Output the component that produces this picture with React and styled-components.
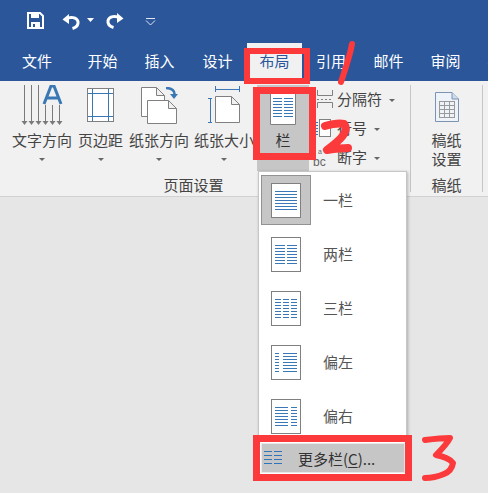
import React from 'react';
import styled, { createGlobalStyle } from 'styled-components';

const GlobalStyle = createGlobalStyle`
  html, body {
    margin: 0;
    padding: 0;
    background: #e6e6e6;
  }
  body {
    font-family: "Noto Sans CJK SC", "Liberation Sans", sans-serif;
  }
`;

const Page = styled.div`
  position: relative;
  width: 488px;
  height: 493px;
  overflow: hidden;
  background: #e6e6e6;
`;

const TitleBar = styled.div`
  height: 81px;
  background: #2b579a;
  display: flex;
  flex-direction: column;
`;

const QuickAccess = styled.div`
  height: 43px;
  display: flex;
  align-items: flex-start;
  padding: 12px 0 0 27px;
  box-sizing: border-box;
`;

const QatIcon = styled.svg`
  display: block;
  margin-left: ${p => p.$gap || 0}px;
  margin-top: ${p => p.$top || 0}px;
`;

const Tabs = styled.div`
  height: 38px;
  display: flex;
`;

const Tab = styled.div`
  width: ${p => p.$w}px;
  flex: none;
  height: 38px;
  box-sizing: border-box;
  padding-bottom: 2px;
  display: flex;
  align-items: center;
  justify-content: center;
  font-size: 15px;
  line-height: 20px;
  color: ${p => (p.$active ? '#2b579a' : '#fff')};
  background: ${p => (p.$active ? '#f1f1f1' : 'transparent')};
`;

const Ribbon = styled.div`
  height: 116px;
  background: #f1f1f1;
  border-bottom: 1px solid #d2d2d2;
  box-sizing: border-box;
  display: flex;
  padding-top: 4px;
`;

const Group = styled.div`
  width: ${p => p.$w}px;
  flex: none;
  height: 107px;
  display: flex;
  flex-direction: column;
  border-right: 1px solid #c6c6c6;
  box-sizing: border-box;
`;

const GroupBody = styled.div`
  height: 90px;
  flex: none;
  display: flex;
  padding-left: ${p => p.$pad || 0}px;
`;

const GroupLabel = styled.div`
  height: 17px;
  font-size: 15px;
  line-height: 20px;
  color: #444;
  text-align: center;
  padding-right: ${p => p.$shift || 0}px;
`;

const LargeButton = styled.div`
  width: ${p => p.$w}px;
  margin-right: ${p => p.$mr || 0}px;
  flex: none;
  display: flex;
  flex-direction: column;
  align-items: center;
  font-size: 15px;
  line-height: 20px;
  color: #444;
  white-space: nowrap;
`;

const IconSlot = styled.div`
  height: ${p => 43 - (p.$lift || 0)}px;
  padding-bottom: ${p => p.$lift || 0}px;
  display: flex;
  align-items: flex-end;
  margin-bottom: 2px;
`;

const Caret = styled.span`
  width: 0;
  height: 0;
  margin-top: 8px;
  border-left: 3px solid transparent;
  border-right: 3px solid transparent;
  border-top: 3px solid #666;
`;

const StackedLabel = styled.span`
  text-align: center;
  line-height: 19px;
`;

const ColumnsButton = styled.div`
  width: 52px;
  height: 86px;
  margin-left: 3px;
  flex: none;
  background: #c6c6c6;
  display: flex;
  flex-direction: column;
  align-items: center;
  font-size: 15px;
  line-height: 20px;
  color: #333;
`;

const ColumnsIcon = styled.svg`
  display: block;
  margin: 8px 0 5px;
`;

const SmallList = styled.div`
  margin: 4px 0 0 8px;
  display: flex;
  flex-direction: column;
  gap: 9px;
`;

const SmallButton = styled.div`
  height: 20px;
  display: flex;
  align-items: center;
  gap: 4px;
  font-size: 15px;
  line-height: 20px;
  color: #444;
  white-space: nowrap;
`;

const SmallIcon = styled.svg`
  display: block;
  flex: none;
  margin-left: ${p => -(p.$nudge || 0)}px;
  margin-right: ${p => p.$nudge || 0}px;
`;

const SmallCaret = styled(Caret)`
  margin: 2px 0 0 3px;
`;

const Menu = styled.div`
  position: absolute;
  left: 258px;
  top: 171px;
  width: 149px;
  height: 304px;
  box-sizing: border-box;
  padding: 3px 1px 0 2px;
  background: #fff;
  border: 1px solid #c6c6c6;
  box-shadow: 1px 1px 3px rgba(0, 0, 0, 0.25);
`;

const MenuItem = styled.div`
  height: 54px;
  display: flex;
  align-items: flex-start;
  font-size: 15px;
  color: #555;
`;

const MenuIconBox = styled.div`
  width: 50px;
  height: 50px;
  box-sizing: border-box;
  display: flex;
  align-items: center;
  justify-content: center;
  background: ${p => (p.$selected ? '#c6c6c6' : 'transparent')};
  border: 1px solid ${p => (p.$selected ? '#929292' : 'transparent')};
`;

const MenuLabel = styled.span`
  margin: 15px 0 0 12px;
  line-height: 20px;
`;

const MoreRow = styled.div`
  height: 30px;
  margin: -2px 0 0 0;
  background: #c6c6c6;
  border: 1px solid #e8e8e8;
  box-sizing: border-box;
  display: flex;
  align-items: center;
  padding-left: 2px;
  font-size: 15px;
  color: #333;
`;

const MoreLabel = styled.span`
  margin-left: 16px;
  u {
    text-underline-offset: 2px;
  }
`;

const Annotations = styled.svg`
  position: absolute;
  left: 0;
  top: 0;
  pointer-events: none;
`;

const BLUE = '#3a78b5';
const GREY = '#808080';
const RED = '#fc3a3c';

const lines = (x1, x2, ys) => ys.map(y => `M${x1} ${y + 0.5}H${x2}`).join('');

const ROWS = [8, 11, 14, 17, 20, 23, 26];

const COLUMN_ICONS = {
  one: lines(4, 26, ROWS),
  two: lines(4, 14, ROWS) + lines(16, 26, ROWS),
  three: lines(4, 10, ROWS) + lines(12, 18, ROWS) + lines(20, 26, ROWS),
  left: lines(4, 8, ROWS) + lines(12, 26, ROWS),
  right: lines(4, 17, ROWS) + lines(20, 26, ROWS),
};

const ColumnDoc = ({ kind }) => (
  <svg width="30" height="35" viewBox="0 0 30 35">
    <rect x="0.5" y="0.5" width="29" height="34" fill="#fff" stroke={GREY} />
    <path d={COLUMN_ICONS[kind]} stroke={BLUE} fill="none" />
  </svg>
);

const SaveIcon = () => (
  <QatIcon width="17" height="17" viewBox="0 0 17 17">
    <path d="M1 1H13L16 4V16H1Z" fill="none" stroke="#fff" strokeWidth="2" />
    <path d="M4 1.5H12V6H4Z" fill="#fff" />
    <path d="M4 10H13V16H4Z" fill="#fff" />
    <path d="M6 12H8V15H6Z" fill="#2b579a" />
  </QatIcon>
);

const UndoIcon = () => (
  <QatIcon width="19" height="17" viewBox="0 0 19 17" $gap={18} $top={1}>
    <path d="M4 6C8 3.5 15 4 16 8.5C16.5 12 14 14.5 10.5 15.5" fill="none" stroke="#fff" strokeWidth="3" />
    <path d="M0.5 6.5L7 1V11Z" fill="#fff" />
  </QatIcon>
);

const RedoIcon = () => (
  <QatIcon width="19" height="17" viewBox="0 0 19 17" $gap={11}>
    <path d="M15 6C11 3.5 4 4 3 8.5C2.5 12 5 14.5 8.5 15.5" fill="none" stroke="#fff" strokeWidth="3" />
    <path d="M18.5 6.5L12 1V11Z" fill="#fff" />
  </QatIcon>
);

const TextDirectionIcon = () => (
  <svg width="42" height="41" viewBox="0 0 42 41">
    <path d="M3.5 0V37M10.5 0V37M17.5 0V37M24.5 20V37M31.5 20V37M38.5 20V37" stroke="#7a7a7a" fill="none" />
    {[3.5, 10.5, 17.5, 24.5, 31.5, 38.5].map(x => (
      <path key={x} d={`M${x - 3} 36H${x + 3}L${x} 40Z`} fill="#7a7a7a" />
    ))}
    <path d="M23 19L30 1H33L40 19M25.5 13H37.5" fill="none" stroke={BLUE} strokeWidth="3" />
  </svg>
);

const MarginsIcon = () => (
  <svg width="28" height="35" viewBox="0 0 28 35">
    <rect x="0.5" y="0.5" width="26" height="33" fill="#fff" stroke={GREY} />
    <path d="M5.5 1V33M21.5 1V33M1 5.5H26M1 28.5H26" stroke={BLUE} fill="none" />
  </svg>
);

const SheetPath = ({ x, y, w, h }) => (
  <path
    d={`M${x} ${y}H${x + w - 8}L${x + w} ${y + 8}V${y + h}H${x}Z M${x + w - 8} ${y}V${y + 8}H${x + w}`}
    fill="#fff"
    stroke={GREY}
  />
);

const OrientationIcon = () => (
  <svg width="37" height="38" viewBox="0 0 37 38">
    <SheetPath x={0.5} y={0.5} w={23} h={29} />
    <SheetPath x={6.5} y={13.5} w={29} h={23} />
    <path d="M25 1C31 1 34 4 33.5 8" fill="none" stroke={BLUE} strokeWidth="2.5" />
    <path d="M29 7H37L33 12Z" fill={BLUE} />
  </svg>
);

const SizeIcon = () => (
  <svg width="32" height="38" viewBox="0 0 32 38">
    <path d="M7.5 0V6M31.5 0V6M8 3.5H31M0 12.5H4M0 36.5H4M2.5 13V36" stroke={BLUE} fill="none" />
    <SheetPath x={7.5} y={10.5} w={24} h={26} />
  </svg>
);

const BreaksIcon = () => (
  <SmallIcon width="16" height="18" viewBox="0 0 16 18">
    <path d="M0.5 0V5.5H15.5V0M0 9.5H2M4 9.5H6M8 9.5H10M12 9.5H14M0.5 18V12.5H15.5V18" fill="none" stroke={GREY} />
  </SmallIcon>
);

const LineNumberIcon = () => (
  <SmallIcon width="16" height="18" viewBox="0 0 16 18" $nudge={2}>
    <rect x="4.5" y="0.5" width="11" height="17" fill="#fff" stroke={GREY} />
    <path d="M0 3.5H3M0 6.5H3M0 9.5H3M0 12.5H3M0 15.5H3" stroke={BLUE} />
  </SmallIcon>
);

const HyphenText = styled.text`
  font-family: "Liberation Sans", sans-serif;
  font-size: ${p => p.$size}px;
  fill: #666;
`;

const HyphenIcon = () => (
  <SmallIcon width="16" height="20" viewBox="0 0 16 20" $nudge={5}>
    <HyphenText x="6" y="7" $size={7}>a</HyphenText>
    <HyphenText x="1" y="19" $size={12}>bc</HyphenText>
  </SmallIcon>
);

const ManuscriptIcon = () => (
  <svg width="24" height="30" viewBox="0 0 24 30">
    <path d="M0.5 0.5H17L23.5 7V29.5H0.5Z" fill="#eef3fa" stroke="#7d93b2" />
    <path d="M17 0.5V7H23.5" fill="#cfdcec" stroke="#7d93b2" />
    <path
      d="M4 9.5H20M4 13.5H20M4 17.5H20M4 21.5H20M4 25.5H20M4.5 9V26M9.5 9V26M14.5 9V26M19.5 9V26"
      stroke="#9a9a9a"
      fill="none"
    />
  </svg>
);

const MoreColumnsIcon = () => (
  <svg width="18" height="14" viewBox="0 0 18 14">
    <path d={lines(0, 8, [0, 4, 8, 12]) + lines(10, 18, [0, 4, 8, 12])} stroke="#2f73bb" fill="none" />
  </svg>
);

const TABS = [
  { label: '文件', w: 74 },
  { label: '开始', w: 57 },
  { label: '插入', w: 57 },
  { label: '设计', w: 59 },
  { label: '布局', w: 55, active: true },
  { label: '引用', w: 58 },
  { label: '邮件', w: 57 },
  { label: '审阅', w: 57 },
  { label: '视图', w: 57 },
];

const LARGE_BUTTONS = [
  { label: '文字方向', w: 60, mr: 6, lift: 2, Icon: TextDirectionIcon },
  { label: '页边距', w: 45, mr: 6, lift: 5, Icon: MarginsIcon },
  { label: '纸张方向', w: 60, mr: 5, lift: 3, Icon: OrientationIcon },
  { label: '纸张大小', w: 60, mr: 0, lift: 4, Icon: SizeIcon },
];

const COLUMN_ITEMS = [
  { kind: 'one', label: '一栏', selected: true },
  { kind: 'two', label: '两栏' },
  { kind: 'three', label: '三栏' },
  { kind: 'left', label: '偏左' },
  { kind: 'right', label: '偏右' },
];

const App = () => (
  <Page>
    <GlobalStyle />
    <TitleBar>
      <QuickAccess>
        <SaveIcon />
        <UndoIcon />
        <QatIcon width="7" height="4" viewBox="0 0 7 4" $gap={6} $top={6}>
          <path d="M0 0H7L3.5 4Z" fill="#fff" />
        </QatIcon>
        <RedoIcon />
        <QatIcon width="11" height="8" viewBox="0 0 11 8" $gap={21} $top={6}>
          <path d="M1 2.5L5.5 7L10 2.5M1 0.5H10" fill="none" stroke="#dfe6f1" />
        </QatIcon>
      </QuickAccess>
      <Tabs>
        {TABS.map(({ label, w, active }) => (
          <Tab key={label} $active={active} $w={w}>
            {label}
          </Tab>
        ))}
      </Tabs>
    </TitleBar>

    <Ribbon>
      <Group $w={411}>
        <GroupBody $pad={12}>
          {LARGE_BUTTONS.map(({ label, w, mr, lift, Icon }) => (
            <LargeButton key={label} $w={w} $mr={mr}>
              <IconSlot $lift={lift}>
                <Icon />
              </IconSlot>
              {label}
              <Caret />
            </LargeButton>
          ))}
          <ColumnsButton>
            <ColumnsIcon width="26" height="32" viewBox="0 0 26 32">
              <path d="M0.5 0V31.5H25.5V0Z" fill="#fff" stroke={GREY} />
              <path d={lines(3, 12, [5, 8, 11, 14, 17, 20, 23]) + lines(14, 23, [5, 8, 11, 14, 17, 20, 23])} stroke={BLUE} fill="none" />
            </ColumnsIcon>
            栏
          </ColumnsButton>
          <SmallList>
            <SmallButton>
              <BreaksIcon />
              分隔符
              <SmallCaret />
            </SmallButton>
            <SmallButton>
              <LineNumberIcon />
              行号
              <SmallCaret />
            </SmallButton>
            <SmallButton>
              <HyphenIcon />
              断字
              <SmallCaret />
            </SmallButton>
          </SmallList>
        </GroupBody>
        <GroupLabel $shift={23}>页面设置</GroupLabel>
      </Group>
      <Group $w={72}>
        <GroupBody>
          <LargeButton $w={71}>
            <IconSlot $lift={6}>
              <ManuscriptIcon />
            </IconSlot>
            <StackedLabel>
              稿纸
              <br />
              设置
            </StackedLabel>
          </LargeButton>
        </GroupBody>
        <GroupLabel>稿纸</GroupLabel>
      </Group>
    </Ribbon>

    <Menu>
      {COLUMN_ITEMS.map(({ kind, label, selected }) => (
        <MenuItem key={kind}>
          <MenuIconBox $selected={selected}>
            <ColumnDoc kind={kind} />
          </MenuIconBox>
          <MenuLabel>{label}</MenuLabel>
        </MenuItem>
      ))}
      <MoreRow>
        <MoreColumnsIcon />
        <MoreLabel>
          更多栏(<u>C</u>)...
        </MoreLabel>
      </MoreRow>
    </Menu>

    <Annotations width="488" height="493" viewBox="0 0 488 493">
      <g fill="none" stroke={RED}>
        <rect x="247" y="51" width="60" height="30" strokeWidth="6" />
        <rect x="256.5" y="90.5" width="56" height="66" strokeWidth="7" />
        <rect x="256.5" y="438.5" width="152" height="39" strokeWidth="7" />
        <g strokeLinecap="round" strokeLinejoin="round">
          <path d="M352 44C350 56 345 70 341 82" strokeWidth="6" />
          <path d="M325 126C332 124 340 123 344 124C347 128 346 133 340 139C335 144 331 147 327 150C334 149 342 148 348 148" strokeWidth="8" />
          <path d="M425 440C433 439 443 438 450 438C447 444 441 450 436 455C442 456 449 458 453 463C452 469 449 472 444 474C437 477 430 478 425 478" strokeWidth="6" />
        </g>
      </g>
    </Annotations>
  </Page>
);

export default App;
